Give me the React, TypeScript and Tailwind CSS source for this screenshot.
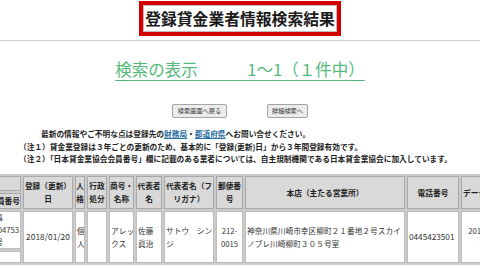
import React from 'react'

const th = 'bg-[#d9d9d9] border border-[#a9a9a9] p-0 font-bold text-center text-[#222] whitespace-nowrap overflow-hidden'
const td = 'bg-white border border-[#bdbdbd] px-[1px] py-0 text-[#333] font-normal whitespace-nowrap overflow-hidden'

function ResultTable() {
  return (
    <table className="table-fixed w-[570px] ml-[-61px] border-separate border-spacing-[2px] bg-[#cbcbcb] text-[7.7px] leading-[13px]">
      <thead>
        <tr>
          <th className={`${th} w-[80px] h-[13px] text-left pl-[2px]`}>登録番号</th>
          <th rowSpan={2} className={`${th} w-[50px]`}>登録（更新）<br />日</th>
          <th rowSpan={2} className={`${th} w-[10px]`}>人<br />格</th>
          <th rowSpan={2} className={`${th} w-[20px]`}>行政<br />処分</th>
          <th rowSpan={2} className={`${th} w-[25px]`}>商号・<br />名称</th>
          <th rowSpan={2} className={`${th} w-[26px]`}>代表者<br />名</th>
          <th rowSpan={2} className={`${th} w-[50px]`}>代表者名（フ<br />リガナ）</th>
          <th rowSpan={2} className={`${th} w-[27px]`}>郵便番<br />号</th>
          <th rowSpan={2} className={`${th} w-[160px]`}>本店（主たる営業所）</th>
          <th rowSpan={2} className={`${th} w-[52px]`}>電話番号</th>
          <th rowSpan={2} className={`${th} w-[46px] text-left pl-[1px]`}>データ更新日</th>
        </tr>
        <tr>
          <th className={`${th} h-[16px] text-right`}>協会会員番号</th>
        </tr>
      </thead>
      <tbody>
        <tr>
          <td className={`${td} h-[38px] leading-[12px]`}>
            <div className="text-right pr-[16px]">神奈川県知事</div>
            <div className="text-right">(01)第04753</div>
            <div className="text-right pr-[16px]">号</div>
          </td>
          <td rowSpan={2} className={`${td} text-center text-[8.4px]`}>2018/01/20</td>
          <td rowSpan={2} className={td}>個<br />人</td>
          <td rowSpan={2} className={td}></td>
          <td rowSpan={2} className={td}>アレッ<br />クス</td>
          <td rowSpan={2} className={td}>佐藤<br />眞治</td>
          <td rowSpan={2} className={td}>サトウ　シン<br />ジ</td>
          <td rowSpan={2} className={`${td} text-center`}>212-<br />0015</td>
          <td rowSpan={2} className={td}>神奈川県川崎市幸区柳町２１番地２号スカイ<br />ノブレ川崎柳町３０５号室</td>
          <td rowSpan={2} className={`${td} text-[8.2px]`}>0445423501</td>
          <td rowSpan={2} className={`${td} text-center`}>2018/01/<br />20</td>
        </tr>
        <tr>
          <td className={`${td} h-[12px] leading-[10px]`}>-</td>
        </tr>
      </tbody>
    </table>
  )
}

export default function App() {
  return (
    <div className="w-[480px] h-[270px] overflow-hidden bg-white font-['Noto_Sans_CJK_JP',sans-serif]">
      {/* Title */}
      <div className="flex justify-center pt-[1px]">
        <div className="border-4 border-[#d40000]">
          <div className="border border-[#bdbdbd] px-[1px] h-[27px] flex items-center text-[15.8px] font-bold text-[#1a1a1a] leading-none">
            登録貸金業者情報検索結果
          </div>
        </div>
      </div>

      <div className="mt-[4px] h-px bg-[#cfcfcf]" />

      {/* Result count */}
      <div className="mt-[18px] flex justify-center">
        <span className="text-[16.5px] leading-[20px] text-[#55b97c] underline underline-offset-[4px] decoration-1 whitespace-pre">
          検索の表示　　　1〜1（１件中）
        </span>
      </div>

      {/* Buttons */}
      <div className="mt-[25px] flex justify-center gap-[40px]">
        <button className="h-[14px] w-[55px] rounded-[2px] border border-[#a5a5a5] bg-[#ececec] text-[6.2px] leading-none text-[#333]">
          検索画面へ戻る
        </button>
        <button className="h-[14px] w-[41px] rounded-[2px] border border-[#a5a5a5] bg-[#ececec] text-[6.2px] leading-none text-[#333]">
          詳細検索へ
        </button>
      </div>

      {/* Notes */}
      <div className="mt-[10px] pl-[19px] text-[7.7px] leading-[12.5px] font-bold text-[#222] whitespace-nowrap">
        <p className="pl-[22px]">
          最新の情報やご不明な点は登録先の
          <span className="text-[#2c6ea6] underline">財務局</span>・
          <span className="text-[#2c6ea6] underline">都道府県</span>
          へお問い合せください。
        </p>
        <p>（注１）貸金業登録は３年ごとの更新のため、基本的に「登録(更新)日」から３年間登録有効です。</p>
        <p>（注２）「日本貸金業協会会員番号」欄に記載のある業者については、自主規制機関である日本貸金業協会に加入しています。</p>
      </div>

      <div className="mt-[8px]">
        <ResultTable />
      </div>
    </div>
  )
}
